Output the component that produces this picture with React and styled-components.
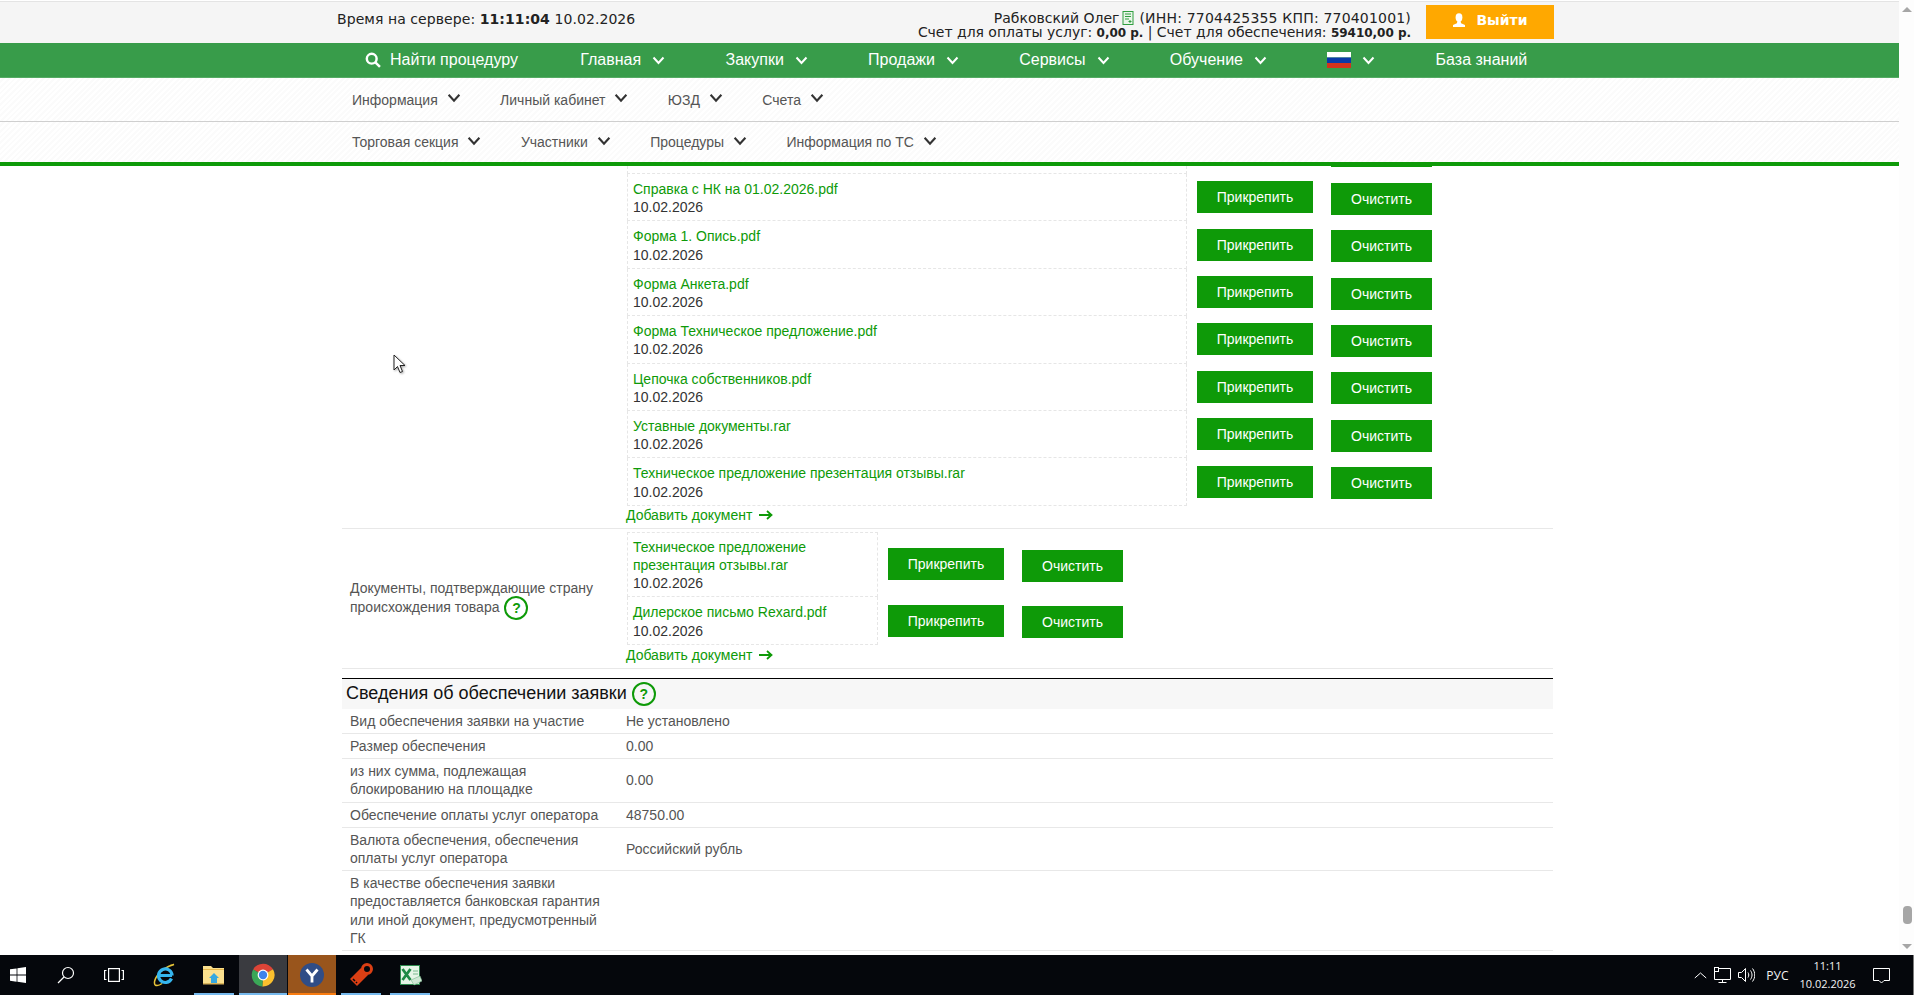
import React from "react";
import styled, { createGlobalStyle } from "styled-components";

const GREEN = "#0e9a08";

const Global = createGlobalStyle`
  html, body { margin: 0; padding: 0; height: 100%; overflow: hidden; background: #fff; }
  body { font-family: "Liberation Sans", Arial, sans-serif; font-size: 14px; color: #444; }
  * { box-sizing: border-box; }
`;

const Screen = styled.div`
  width: 1914px; height: 995px; display: flex; flex-direction: column; overflow: hidden; position: relative;
`;
const Browser = styled.div`
  flex: 0 0 955px; display: flex; min-height: 0;
`;
const Viewport = styled.div`
  flex: 1; display: flex; flex-direction: column; min-width: 0; overflow: hidden;
`;
const Scrollbar = styled.div`
  flex: 0 0 15px; display: flex; flex-direction: column; align-items: center; background: #fdfdfd;
`;
const ScrollArrow = styled.div`
  width: 0; height: 0; border-left: 5px solid transparent; border-right: 5px solid transparent;
  ${(p) => (p.$down ? "border-top: 5px solid #a6a6a6; margin-top: 20px; margin-bottom: 6px;" : "border-bottom: 5px solid #a6a6a6; margin-top: 7px;")}
`;
const ScrollThumb = styled.div`
  width: 9px; height: 18px; border-radius: 4px; background: #a6a6a6; margin-top: auto; margin-left: 1px;
`;

const TopBar = styled.div`
  height: 42px; background: #f5f5f5; border-top: 1px solid #e4e4e4; margin-top: 1px;
  display: flex; align-items: flex-start; padding-left: 337px; font-family: "DejaVu Sans", Verdana, sans-serif;
  font-size: 14px; color: #222;
`;
const ServerTime = styled.div`
  flex: 0 0 auto; margin-top: 9px; line-height: 17px; letter-spacing: .07px;
  b { font-weight: 700; }
`;
const Account = styled.div`
  margin-left: auto; text-align: right; line-height: 14px; padding-top: 9px; white-space: nowrap;
  b { font-weight: 700; font-size: 12px; }
`;
const Requisites = styled.span`
  letter-spacing: .19px;
`;
const AccountLine = styled.span`
  letter-spacing: -.03px;
`;
const AccountIcon = styled.svg`
  width: 12px; height: 14px; vertical-align: -2px; margin: 0 5px 0 3px;
`;
const LogoutButton = styled.div`
  margin: 3px 345px 0 15px; width: 128px; height: 34px; background: #ffa800; color: #fff; padding-bottom: 4px;
  display: flex; align-items: center; justify-content: center; gap: 10px; font-weight: 700; font-size: 14px;
`;

const MainNav = styled.div`
  height: 35px; background: #389c4a; display: flex; align-items: center; gap: 60.3px; padding-left: 365px;
  color: #fff; font-size: 16px; border-bottom: 1px solid #55ab64;
`;
const NavItem = styled.div`
  display: flex; align-items: center; gap: ${(p) => p.$gap ?? 11}px; white-space: nowrap;
`;
const SearchItem = styled(NavItem)`
  margin-right: 2px;
`;
const SubNav = styled.div`
  height: ${(p) => p.$h}px; display: flex; align-items: center; gap: 39.4px; padding-left: 352px; color: #555;
  background: repeating-linear-gradient(135deg, #fff 0 2px, #fbfbfb 2px 4px);
  border-bottom: ${(p) => p.$border};
  svg { color: #333; margin-top: -3px; }
`;
const GreenRule = styled.div`
  flex: 0 0 4px; background: ${GREEN};
`;

const Content = styled.div`
  width: 1211px; margin-left: 342px; flex: 1; min-height: 0; overflow: hidden;
`;
const DocSection = styled.div`
  display: flex; border-bottom: 1px solid #e8e8e8; padding-bottom: 4px;
  padding-top: ${(p) => p.$pt}px;
`;
const SectionLabel = styled.div`
  flex: 0 0 285px; padding: 0 16px 0 8px; align-self: center; line-height: 19px; color: #555;
`;
const LabelLine = styled.div`
  white-space: nowrap;
`;
const DocColumn = styled.div`
  flex: 1; min-width: 0;
`;
const DocRow = styled.div`
  display: flex; align-items: center;
`;
const DocFile = styled.div`
  flex: 0 0 ${(p) => p.$w}px; border: 1px dashed #e6e6e6; border-top: ${(p) => (p.$first ? "1px dashed #e6e6e6" : "0")};
  padding: ${(p) => (p.$first ? 5 : 6)}px 5px 4px; line-height: 18.2px; color: #333;
`;
const StubFile = styled.div`
  flex: 0 0 560px; height: 8px; border-left: 1px dashed #e6e6e6; border-right: 1px dashed #e6e6e6;
  border-bottom: 1px dashed #e6e6e6;
`;
const FileLink = styled.div`
  color: ${GREEN};
`;
const AttachButton = styled.div`
  flex: 0 0 116px; height: 32px; margin-left: 10px; margin-bottom: 1px; background: ${GREEN}; color: #fff;
  display: flex; align-items: center; justify-content: center;
`;
const ClearButton = styled.div`
  flex: 0 0 101px; height: 32px; margin-left: 18px; margin-top: 2px; background: ${GREEN}; color: #fff;
  display: flex; align-items: center; justify-content: center;
`;
const ClearStub = styled.div`
  flex: 0 0 101px; height: 1px; margin-left: 144px; margin-bottom: 7px; background: ${GREEN};
`;
const AddLink = styled.div`
  display: flex; align-items: center; gap: 7px; color: ${GREEN}; line-height: 18px; margin-left: -1px;
  margin-top: ${(p) => p.$mt ?? 0}px;
`;
const Help = styled.span`
  display: inline-flex; align-items: center; justify-content: center; width: 24px; height: 24px; border-radius: 50%;
  border: 2px solid ${GREEN}; color: ${GREEN}; font-size: 14px; font-weight: 700; vertical-align: middle;
  font-family: "Liberation Sans", sans-serif; margin: -3px 0 -3px 5px;
`;
const SectionHead = styled.div`
  margin-top: 9px; height: 31px; border-top: 1px solid #000; background: #f7f7f7; display: flex; align-items: center;
  padding-left: 4px; font-size: 18px; color: #111;
`;
const InfoRow = styled.div`
  display: flex; align-items: center; border-bottom: 1px solid #e8e8e8; padding: 3px 0; line-height: 18.2px; color: #555;
`;
const InfoLabel = styled.div`
  flex: 0 0 284px; padding: 0 24px 0 8px;
`;
const InfoValue = styled.div`
  flex: 1;
`;
const Cursor = styled.svg`
  position: absolute; left: 393px; top: 354px; width: 14px; height: 21px;
  filter: drop-shadow(1px 1px 1px rgba(0,0,0,.35));
`;

const Taskbar = styled.div`
  flex: 0 0 40px; background: #05070c; display: flex; align-items: stretch; color: #fff;
`;
const TaskSlot = styled.div`
  flex: 0 0 ${(p) => p.$w ?? 48}px; display: flex; align-items: center; justify-content: center; position: relative;
  background: ${(p) => p.$bg ?? "transparent"}; margin-right: ${(p) => p.$mr ?? 0}px;
  &::after {
    content: ""; position: absolute; left: 0; right: 0; bottom: 0; height: 2px;
    background: ${(p) => p.$line ?? "transparent"};
  }
`;
const Tray = styled.div`
  margin-left: auto; display: flex; align-items: center; padding-right: 5px; height: 100%;
  border-right: 1px solid #7c7c7c;
`;
const TrayIcon = styled.svg`
  width: ${(p) => p.$w}px; height: 20px; margin-right: ${(p) => p.$mr}px; display: block;
`;
const TrayLang = styled.div`
  font-family: "Open Sans", sans-serif; font-size: 12px; margin-right: 11px; color: #f2f2f2;
`;
const Clock = styled.div`
  width: 56px; text-align: center; font-family: "Open Sans", sans-serif; font-size: 11px; line-height: 18px;
  margin-right: 17.5px; color: #f2f2f2; white-space: nowrap;
`;

const Chevron = ({ size = 11, w = 2 }) => (
  <svg width={size + 2} height={size} viewBox="0 0 13 11" fill="none">
    <path d="M1.500 2.500 6.500 8l5-5.500" stroke="currentColor" strokeWidth={w} />
  </svg>
);

const ArrowRight = () => (
  <svg width="14" height="10" viewBox="0 0 14 10" fill="none">
    <path d="M0 5h12M8 1l4.500 4L8 9" stroke={GREEN} strokeWidth="1.800" />
  </svg>
);

const Flag = () => (
  <svg width="24" height="16" viewBox="0 0 24 16">
    <rect width="24" height="5.500" fill="#fff" />
    <rect y="5.500" width="24" height="5.500" fill="#0a3aa8" />
    <rect y="11" width="24" height="5" fill="#d4321c" />
  </svg>
);

const docs1 = [
  "Справка с НК на 01.02.2026.pdf",
  "Форма 1. Опись.pdf",
  "Форма Анкета.pdf",
  "Форма Техническое предложение.pdf",
  "Цепочка собственников.pdf",
  "Уставные документы.rar",
  "Техническое предложение презентация отзывы.rar",
];

const mainNav = ["Главная", "Закупки", "Продажи", "Сервисы", "Обучение"];
const sub1 = ["Информация", "Личный кабинет", "ЮЗД", "Счета"];
const sub2 = ["Торговая секция", "Участники", "Процедуры", "Информация по ТС"];

const Doc = ({ name, w, first }) => (
  <DocRow>
    <DocFile $w={w} $first={first}>
      <FileLink>{name}</FileLink>
      10.02.2026
    </DocFile>
    <AttachButton>Прикрепить</AttachButton>
    <ClearButton>Очистить</ClearButton>
  </DocRow>
);

export default function App() {
  return (
    <Screen>
      <Global />
      <Browser>
        <Viewport>
          <TopBar>
            <ServerTime>Время на сервере: <b>11:11:04</b> 10.02.2026</ServerTime>
            <Account>
              Рабковский Олег
              <AccountIcon viewBox="0 0 12 14" fill="none">
                <rect x="1" y=".5" width="10" height="13" fill="#e9f6e9" stroke="#2f9e3f" />
                <path d="M3 3h6M3 5.500h6M3 8h4M8 9v3M6.500 10.500h3" stroke="#2f9e3f" />
              </AccountIcon>
              <Requisites>(ИНН: 7704425355 КПП: 770401001)</Requisites>
              <br />
              <AccountLine>Счет для оплаты услуг: <b>0,00 р.</b> | Счет для обеспечения: <b>59410,00 р.</b></AccountLine>
            </Account>
            <LogoutButton>
              <svg width="14" height="14" viewBox="0 0 14 14" fill="#fff">
                <ellipse cx="7" cy="4.500" rx="3.400" ry="4.200" />
                <path d="M5.500 8h3l.6 2.200L13 12v2H1v-2l3.900-1.800z" />
              </svg>
              Выйти
            </LogoutButton>
          </TopBar>
          <MainNav>
            <SearchItem $gap={9}>
              <svg width="16" height="16" viewBox="0 0 15 15" fill="none" stroke="#fff" strokeWidth="2.300">
                <circle cx="6.300" cy="6.300" r="4.600" />
                <path d="m9.500 9.500 4.500 4.500" />
              </svg>
              Найти процедуру
            </SearchItem>
            {mainNav.map((n) => (
              <NavItem key={n}>
                {n}
                <Chevron />
              </NavItem>
            ))}
            <NavItem>
              <Flag />
              <Chevron />
            </NavItem>
            <NavItem>База знаний</NavItem>
          </MainNav>
          <SubNav $h={44} $border="1px solid #cfcfcf">
            {sub1.map((n) => (
              <NavItem key={n} $gap={9}>
                {n}
                <Chevron size={12} />
              </NavItem>
            ))}
          </SubNav>
          <SubNav $h={40} $border="none">
            {sub2.map((n) => (
              <NavItem key={n} $gap={9}>
                {n}
                <Chevron size={12} />
              </NavItem>
            ))}
          </SubNav>
          <GreenRule />
          <Content>
            <DocSection $pt={0}>
              <SectionLabel />
              <DocColumn>
                <DocRow>
                  <StubFile />
                  <ClearStub />
                </DocRow>
                {docs1.map((d) => (
                  <Doc key={d} name={d} w={560} />
                ))}
                <AddLink>
                  Добавить документ
                  <ArrowRight />
                </AddLink>
              </DocColumn>
            </DocSection>
            <DocSection $pt={3}>
              <SectionLabel>
                <LabelLine>Документы, подтверждающие страну</LabelLine>
                <LabelLine>
                  происхождения товара
                  <Help>?</Help>
                </LabelLine>
              </SectionLabel>
              <DocColumn>
                <Doc name={<>Техническое предложение<br />презентация отзывы.rar</>} w={251} first />
                <Doc name="Дилерское письмо Rexard.pdf" w={251} />
                <AddLink $mt={1}>
                  Добавить документ
                  <ArrowRight />
                </AddLink>
              </DocColumn>
            </DocSection>
            <SectionHead>
              Сведения об обеспечении заявки
              <Help>?</Help>
            </SectionHead>
            <InfoRow><InfoLabel>Вид обеспечения заявки на участие</InfoLabel><InfoValue>Не установлено</InfoValue></InfoRow>
            <InfoRow><InfoLabel>Размер обеспечения</InfoLabel><InfoValue>0.00</InfoValue></InfoRow>
            <InfoRow><InfoLabel>из них сумма, подлежащая блокированию на площадке</InfoLabel><InfoValue>0.00</InfoValue></InfoRow>
            <InfoRow><InfoLabel>Обеспечение оплаты услуг оператора</InfoLabel><InfoValue>48750.00</InfoValue></InfoRow>
            <InfoRow><InfoLabel>Валюта обеспечения, обеспечения оплаты услуг оператора</InfoLabel><InfoValue>Российский рубль</InfoValue></InfoRow>
            <InfoRow><InfoLabel>В качестве обеспечения заявки предоставляется банковская гарантия или иной документ, предусмотренный ГК</InfoLabel><InfoValue /></InfoRow>
          </Content>
        </Viewport>
        <Scrollbar>
          <ScrollArrow />
          <ScrollThumb />
          <ScrollArrow $down />
        </Scrollbar>
      </Browser>
      <Taskbar>
        <TaskSlot $w={36} $mr={6}>
          <svg width="16" height="16" viewBox="0 0 16 16" fill="#fff">
            <path d="M0 2.300 6.600 1.400v6.200H0zM7.400 1.300 16 0v7.600H7.400zM0 8.400h6.600v6.300L0 13.800zM7.400 8.400H16V16l-8.600-1.200z" />
          </svg>
        </TaskSlot>
        <TaskSlot $w={48}>
          <svg width="18" height="18" viewBox="0 0 18 18" fill="none" stroke="#fff" strokeWidth="1.200">
            <circle cx="11" cy="7" r="5.500" />
            <path d="M7 11 1 17" />
          </svg>
        </TaskSlot>
        <TaskSlot $w={48} $mr={2}>
          <svg width="20" height="14" viewBox="0 0 20 14" fill="none" stroke="#fff" strokeWidth="1.200">
            <rect x="4.600" y=".6" width="10.800" height="12.800" />
            <path d="M2.500 2.500H.6v9h1.900M17.500 2.500h1.900v9h-1.900" />
          </svg>
        </TaskSlot>
        <TaskSlot $w={50} $mr={4}>
          <svg width="24" height="24" viewBox="0 0 24 24" fill="none">
            <path d="M2 22C0 18 5 6 21 1.500c-2 0-4 .8-6 2.500M2 22c2 1 5 0 7-1.500" stroke="#e8c53a" strokeWidth="1.500" />
            <path d="M19 12.500H6.800M18.500 15.500a6.800 6.800 0 1 1 .6-3" stroke="#35b5ee" strokeWidth="3.200" />
          </svg>
        </TaskSlot>
        <TaskSlot $w={40} $mr={5} $line="#76b9ed">
          <svg width="22" height="20" viewBox="0 0 22 20">
            <path d="M0 1h8l2 2h11v15H0z" fill="#fbe08e" />
            <path d="M0 4h21v1H0z" fill="#e8b84a" />
            <path d="M6 13l5-5 5 5h-2v5H8v-5z" fill="#36a8e0" />
            <path d="M0 18h21v1.500H0z" fill="#d8b25a" />
          </svg>
        </TaskSlot>
        <TaskSlot $w={48} $mr={1} $bg="#3a3b40" $line="#76b9ed">
          <svg width="24" height="24" viewBox="0 0 24 24">
            <path d="M12 12 2.100 6.500A11.500 11.500 0 0 1 22 6.300z" fill="#dc4437" />
            <path d="M12 12 22 6.300A11.500 11.500 0 0 1 11.300 23.500z" fill="#fbc02d" />
            <path d="M12 12 11.300 23.500A11.500 11.500 0 0 1 2.100 6.500z" fill="#3aa757" />
            <circle cx="12" cy="12" r="5.400" fill="#fff" />
            <circle cx="12" cy="12" r="4.200" fill="#3f83ec" />
          </svg>
        </TaskSlot>
        <TaskSlot $w={48} $mr={5} $bg="#99551c" $line="#f97c10">
          <svg width="24" height="24" viewBox="0 0 24 24">
            <circle cx="12" cy="12" r="12" fill="#304d86" />
            <path d="M6.500 6.500 12 13l5.500-6.500M12 13v6.500" fill="none" stroke="#fff" strokeWidth="2.800" />
          </svg>
        </TaskSlot>
        <TaskSlot $w={40} $mr={9} $line="#76b9ed">
          <svg width="24" height="24" viewBox="0 0 24 24">
            <path d="M1 16 12 5l7 7L8 23z" fill="#db3f14" />
            <circle cx="18" cy="6" r="4.500" fill="none" stroke="#db3f14" strokeWidth="3" />
            <path d="M4 16l2 2M7 19l1 1" stroke="#05070c" strokeWidth="1.500" />
          </svg>
        </TaskSlot>
        <TaskSlot $w={40} $line="#76b9ed">
          <svg width="23" height="23" viewBox="0 0 23 23">
            <rect x="1.500" y="1.500" width="19" height="19" fill="#e6f4e6" stroke="#2e8b4e" />
            <path d="M3.500 5l8 11M11.500 5l-8 11" stroke="#1e8a45" strokeWidth="2.800" />
            <path d="M12 16l9-4 2 5-8 4z" fill="#cfe8d4" stroke="#7bb98f" strokeWidth=".6" />
            <path d="M14 7h5M14 10h5" stroke="#7bb98f" />
          </svg>
        </TaskSlot>
        <Tray>
          <TrayIcon $w={13} $mr={7.6} viewBox="0 0 13 20" fill="none" stroke="#fff">
            <path d="m.8 13 5.700-5 5.700 5" />
          </TrayIcon>
          <TrayIcon $w={17} $mr={6.5} viewBox="0 0 17 20" fill="none" stroke="#fff">
            <path d="M.5 3.500h16v11H.5zM8.500 14.500v3M4.500 17.500h8" />
            <rect x=".5" y="2.500" width="4" height="4" fill="#05070c" />
          </TrayIcon>
          <TrayIcon $w={17} $mr={11.5} viewBox="0 0 17 20" fill="none" stroke="#fff">
            <path d="M.5 7.500h3l4-4v13l-4-4h-3zM10 7.500c1 1.500 1 3.500 0 5M12.500 5.500c2 3 2 6 0 9M14.500 3.500c3 4 3 9 0 13" />
          </TrayIcon>
          <TrayLang>РУС</TrayLang>
          <Clock>11:11<br />10.02.2026</Clock>
          <TrayIcon $w={17} $mr={18} viewBox="0 0 17 20" fill="none" stroke="#fff">
            <path d="M.5 3.500h16v12H11l-2.500 2.500L6 15.500H.5z" />
          </TrayIcon>
        </Tray>
      </Taskbar>
      <Cursor viewBox="0 0 14 21">
        <path d="M1 1v15l3.500-3.500L7 18.500l2.500-1-2.500-6h5z" fill="#fff" stroke="#222" strokeWidth="1" />
      </Cursor>
    </Screen>
  );
}
